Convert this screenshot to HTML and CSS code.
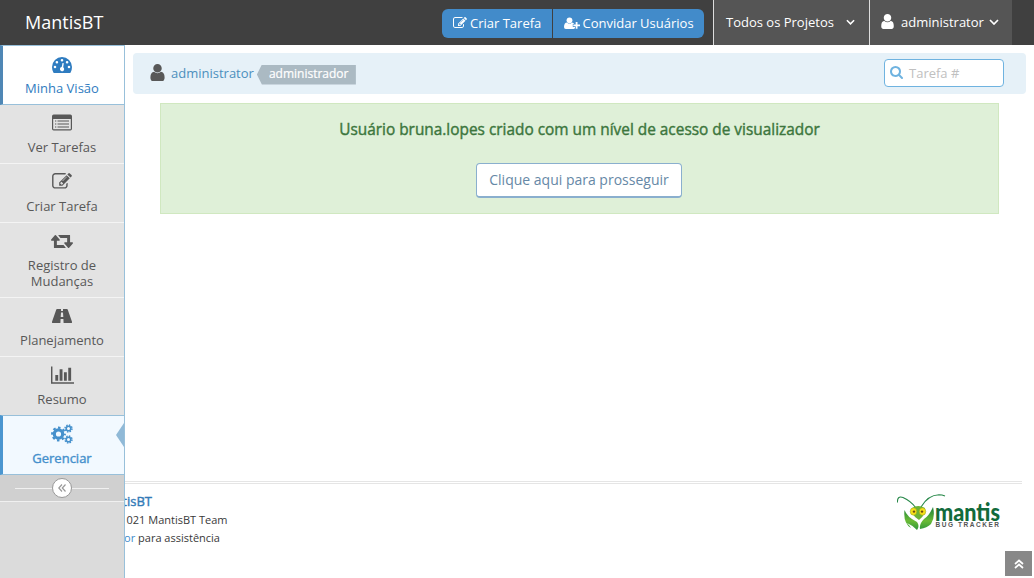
FILE: index.html
```html
<!DOCTYPE html>
<html lang="pt-BR">
<head>
<meta charset="utf-8">
<title>MantisBT</title>
<link rel="stylesheet" href="styles.css">
</head>
<body>
<svg class="defs" width="0" height="0">
  <symbol id="user" viewBox="256 128 1280 1536"><path d="M1536 1399q0 109-62.500 187t-150.500 78h-854q-88 0-150.500-78t-62.500-187q0-85 8.500-160.500t31.500-152 58.500-131 94-89 134.500-34.500q131 128 313 128t313-128q76 0 134.500 34.500t94 89 58.500 131 31.500 152 8.500 160.500zm-256-887q0 159-112.500 271.500t-271.500 112.500-271.500-112.500-112.500-271.500 112.500-271.500 271.500-112.500 271.500 112.500 112.500 271.500z"/></symbol>
  <symbol id="edit" viewBox="0 128 1792 1536"><path d="M888 1184l116-116-152-152-116 116v56h96v96h56zm440-720q-16-16-33 1l-350 350q-17 17-1 33t33-1l350-350q17-17 1-33zm80 594v190q0 119-84.500 203.500t-203.500 84.500h-832q-119 0-203.500-84.500t-84.500-203.500v-832q0-119 84.500-203.500t203.500-84.500h832q63 0 117 25 15 7 18 23 3 17-9 29l-49 49q-14 14-32 8-23-6-45-6h-832q-66 0-113 47t-47 113v832q0 66 47 113t113 47h832q66 0 113-47t47-113v-126q0-13 9-22l64-64q15-15 35-7t20 29zm-96-738l288 288-672 672h-288v-288zm444 132l-92 92-288-288 92-92q28-28 68-28t68 28l152 152q28 28 28 68t-28 68z"/></symbol>
  <symbol id="search" viewBox="64 128 1664 1664"><path d="M1216 832q0-185-131.500-316.500t-316.500-131.500-316.500 131.500-131.500 316.500 131.500 316.500 316.500 131.500 316.500-131.500 131.500-316.500zm512 832q0 52-38 90t-90 38q-54 0-90-38l-343-342q-179 124-399 124-143 0-273.500-55.500t-225-150-150-225-55.500-273.500 55.500-273.500 150-225 225-150 273.500-55.500 273.500 55.500 225 150 150 225 55.500 273.500q0 220-124 399l343 343q37 37 37 90z"/></symbol>
  <symbol id="down" viewBox="0 0 10 6"><path d="M1 1l4 4 4-4" fill="none" stroke="currentColor" stroke-width="1.700"/></symbol>
</svg>

<header class="navbar">
  <span class="brand">MantisBT</span>
  <div class="nav-right">
    <div class="btn-group">
      <a class="nav-btn"><svg class="i-edit"><use href="#edit"/></svg>Criar Tarefa</a>
      <a class="nav-btn"><svg class="i-plus" viewBox="0 0 16 12"><circle cx="5.500" cy="3.300" r="2.900"/><path d="M3 5.400Q5.500 7.800 8 5.400Q9.500 5.400 10.200 7H8.800V10H11V11Q10.500 12 9.400 12H1.800Q0 12 0 10Q0 5.600 3 5.400Z"/><path d="M11.700 5h1.800v2.500H16v1.800h-2.500v2.500h-1.800V9.300H9.300V7.500h2.400z"/></svg>Convidar Usuários</a>
    </div>
    <a class="nav-item projects">Todos os Projetos<svg class="i-down"><use href="#down"/></svg></a>
    <a class="nav-item account"><svg class="i-user"><use href="#user"/></svg>administrator<svg class="i-down"><use href="#down"/></svg></a>
  </div>
</header>

<div class="container">
  <nav class="sidebar">
    <a class="side-item hover"><svg viewBox="0 0 20 16"><path fill-rule="evenodd" d="M0 10A10 10 0 0 1 20 10Q20 13 18.600 15.500Q18.300 16 17.700 16H2.300Q1.700 16 1.400 15.500Q0 13 0 10ZM1.700 10a1.300 1.300 0 1 0 2.600 0a1.300 1.300 0 1 0-2.600 0M3.600 5.200a1.300 1.300 0 1 0 2.600 0a1.300 1.300 0 1 0-2.600 0M8.700 3.200a1.300 1.300 0 1 0 2.600 0a1.300 1.300 0 1 0-2.600 0M13.800 5.200a1.300 1.300 0 1 0 2.600 0a1.300 1.300 0 1 0-2.600 0M15.700 10a1.300 1.300 0 1 0 2.600 0a1.300 1.300 0 1 0-2.600 0M10.500 6L9.700 10A2.100 2.100 0 1 0 11.200 10.300L11.800 6.300Z"/></svg><span>Minha Visão</span></a>
    <a class="side-item"><svg viewBox="0 0 20 16"><path fill-rule="evenodd" d="M1.700 0H18.300Q20 0 20 1.700V14.300Q20 16 18.300 16H1.700Q0 16 0 14.300V1.700Q0 0 1.700 0ZM1.200 4.500V14.300Q1.200 14.800 1.700 14.800H18.300Q18.800 14.800 18.800 14.300V4.500Z"/><path d="M3 6h1.300v1H3zM5.500 6H17v1H5.500zM3 9h1.300v1H3zM5.500 9H17v1H5.500zM3 12h1.300v1H3zM5.500 12H17v1H5.500z"/></svg><span>Ver Tarefas</span></a>
    <a class="side-item"><svg><use href="#edit"/></svg><span>Criar Tarefa</span></a>
    <a class="side-item"><svg class="i-retweet" viewBox="0 384 1920 1152" preserveAspectRatio="none"><path d="M1280 1504q0 13-9.500 22.500t-22.500 9.500h-960q-8 0-13.500-2t-9-7-5.500-8-3-11.500-1-11.500v-600h-192q-26 0-45-19t-19-45q0-24 15-41l320-384q19-22 49-22t49 22l320 384q15 17 15 41 0 26-19 45t-45 19h-192v384h576q16 0 25 11l160 192q7 10 7 21zm640-416q0 24-15 41l-320 384q-20 23-49 23t-49-23l-320-384q-15-17-15-41 0-26 19-45t45-19h192v-384h-576q-16 0-25-12l-160-192q-7-9-7-20 0-13 9.500-22.500t22.500-9.500h960q8 0 13.500 2t9 7 5.500 8 3 11.500 1 11.500v600h192q26 0 45 19t19 45z"/></svg><span>Registro de Mudanças</span></a>
    <a class="side-item"><svg class="i-road" viewBox="0 0 20 14"><path fill-rule="evenodd" d="M5 0H9V2H11V0H15Q15.500 0 15.700.5L20 12.700Q20.200 14 19.300 14H11.600L11.400 10H8.600L8.400 14H.7Q-.2 14 0 12.700L4.300.5Q4.500 0 5 0ZM9 3.500L8.700 8H11.300L11 3.500Z"/></svg><span>Planejamento</span></a>
    <a class="side-item"><svg class="i-chart" viewBox="0 128 2048 1536"><path d="M640 896v512h-256v-512h256zm384-512v1024h-256v-1024h256zm1024 1152v128h-2048v-1536h128v1408h1920zm-640-896v768h-256v-768h256zm384-384v1152h-256v-1152h256z"/></svg><span>Resumo</span></a>
    <a class="side-item active"><svg class="i-cogs" viewBox="0 0 22 20"><g fill="none" stroke="currentColor"><circle cx="7.500" cy="10" r="4.200" stroke-width="3.200"/><circle cx="7.500" cy="10" r="6.300" stroke-width="2.200" stroke-dasharray="2.500 2.448" stroke-dashoffset="1.250"/><circle cx="17.500" cy="4.500" r="2.300" stroke-width="1.600"/><circle cx="17.500" cy="4.500" r="3.500" stroke-width="1.400" stroke-dasharray="1.500 1.249"/><circle cx="17.500" cy="15.500" r="2.300" stroke-width="1.600"/><circle cx="17.500" cy="15.500" r="3.500" stroke-width="1.400" stroke-dasharray="1.500 1.249"/></g></svg><span>Gerenciar</span><i class="arrow"></i></a>
    <div class="toggle"><span class="toggle-btn"><svg viewBox="0 0 8 8"><path d="M4 .5L.8 4L4 7.500M7.500.5L4.300 4L7.500 7.500" fill="none" stroke="currentColor" stroke-width="1.200"/></svg></span></div>
  </nav>

  <main class="main">
    <div class="crumbs">
      <svg class="i-user"><use href="#user"/></svg>
      <a class="crumb-user">administrator</a>
      <span class="label">administrador</span>
      <div class="search"><svg><use href="#search"/></svg><span>Tarefa #</span></div>
    </div>
    <section class="alert">
      <p>Usuário bruna.lopes criado com um nível de acesso de visualizador</p>
      <a class="proceed">Clique aqui para prosseguir</a>
    </section>
    <footer class="footer">
      <div class="credits">
        <div class="line l1"><a class="strong">tisBT</a></div>
        <div class="line l2">021 MantisBT Team</div>
        <div class="line l3"><span><a>or</a> para assistência</span></div>
      </div>
      <svg class="logo" viewBox="0 0 104 38">
        <defs><linearGradient id="claw" x2="0" y2="1"><stop offset="0" stop-color="#187f3a"/><stop offset=".6" stop-color="#6abb35"/><stop offset="1" stop-color="#2f963c"/></linearGradient></defs>
        <path d="M19 14Q14 7 6 3.500Q0 1.500 .5 8.500M24 13Q31 1 42 .7Q45 .7 48 2" fill="none" stroke="#278849" stroke-width="1.100"/>
        <path d="M7.500 16Q10 23 20 28Q23 32 20 36Q15 31 10 29Q13 32 14 34Q6 29 7.500 16ZM36 13Q38.500 23 34 30Q30 34 23 35Q22 30 27 25Q32 22 36 13Z" fill="url(#claw)"/>
        <path d="M15 14Q21 10 28 14L28 19Q25 24 22 26Q18 24 15 19Z" fill="#6cb334"/>
        <ellipse cx="16.500" cy="17.500" rx="3.300" ry="3.700" fill="#f5df18" stroke="#8fa323" stroke-width=".5"/>
        <ellipse cx="25.500" cy="17.500" rx="3.300" ry="3.700" fill="#f5df18" stroke="#8fa323" stroke-width=".5"/>
        <circle cx="17" cy="17.600" r="1.200" fill="#6d4a12"/><circle cx="25" cy="17.600" r="1.200" fill="#6d4a12"/>
        <text class="logo-name" x="38" y="26.500" textLength="65" lengthAdjust="spacingAndGlyphs">mantis</text>
        <text class="logo-sub" x="38.500" y="33" textLength="63.500" lengthAdjust="spacing">BUG TRACKER</text>
      </svg>
    </footer>
  </main>
</div>
<a class="scroll-up"><svg viewBox="0 0 10 10"><path d="M1 5L5 1.500L9 5M1 9L5 5.500L9 9" fill="none" stroke="currentColor" stroke-width="1.700"/></svg></a>
</body>
</html>
```
FILE: styles.css
```css
* { box-sizing: border-box; }
body { margin: 0; height: 578px; overflow: hidden; display: flex; flex-direction: column; font: 13px/20px "Open Sans", sans-serif; color: #393939; background: #fff; }
svg { fill: currentColor; display: block; flex: none; }
.defs { position: absolute; }
.navbar { height: 45px; flex: none; background: #404040; color: #fff; display: flex; justify-content: space-between; padding: 0 22px 0 25px; }
.brand { font-size: 18px; line-height: 44px; }
.nav-right { display: flex; }
.btn-group { display: flex; gap: 1px; padding: 9px 9px 7px 0; }
.nav-btn { display: flex; align-items: center; background: #428bca; height: 29px; padding-bottom: 2px; white-space: nowrap; }
.nav-btn:first-child { width: 110px; padding-left: 11px; border-radius: 6px 0 0 6px; gap: 3px; }
.nav-btn:last-child { width: 151px; padding-left: 11px; border-radius: 0 6px 6px 0; gap: 2.500px; }
.i-edit { width: 14px; height: 12px; }
.i-plus { width: 16px; height: 12px; }
.nav-item { height: 45px; line-height: 44px; background: #555; border-left: 1px solid #ddd; display: flex; align-items: center; white-space: nowrap; }
.projects { width: 156px; padding: 0 14px 1px 12px; justify-content: space-between; }
.account { width: 143px; padding: 0 13px 1px 11px; }
.account .i-user { width: 13px; height: 15px; margin: -2px 7px 0 0; }
.account .i-down { margin-left: auto; width: 10px; }
.i-down { width: 9px; height: 6px; margin-top: 0; }
.container { flex: 1; display: flex; min-height: 0; }
.sidebar { width: 125px; flex: none; position: relative; z-index: 1; background: #dbdbdb; border-right: 1px solid #98c0da; }
.side-item { position: relative; display: flex; flex-direction: column; align-items: center; min-height: 59px; padding: 9px 18px 8px; background: #e3e3e3; border-bottom: 1px solid #f4f4f4; color: #585858; line-height: 16px; text-align: center; }
.side-item svg { width: 20px; height: 17px; margin-bottom: 8px; }
.side-item span { margin: 0 -8px; }
.side-item:nth-child(4) span { margin: 0; }
.side-item .i-retweet { width: 22px; height: 13px; margin: 3px 0 9px; }
.side-item .i-road { width: 20px; height: 14px; margin: 2px 0 9px; }
.side-item .i-chart { width: 23px; height: 18px; margin-bottom: 7px; }
.side-item .i-cogs { width: 22px; height: 20px; margin: -1px 0 6px; }
.side-item.hover { min-height: 60px; background: #fff; color: #2f7cc0; border-top: 1px solid #98c0da; border-bottom-color: #98c0da; border-left: 3px solid #4f87b5; padding: 9px 18px 7px 15px; }
.side-item.hover svg { margin: 2px 0 7px; height: 16px; }
.side-item.active { min-height: 60px; margin-top: -1px; background: #f2f9ff; color: #4590cc; border-top: 1px solid #98c0da; border-bottom-color: #98c0da; border-left: 3px solid #4b96d0; padding-left: 15px; -webkit-text-stroke: .4px; }
.arrow { position: absolute; right: 0; top: 7px; border: solid transparent; border-width: 12px 8px 12px 0; border-right-color: #90b9d7; }
.toggle { height: 27px; background: #d0d0d0; border-bottom: 1px solid #f0f0f0; display: flex; align-items: center; justify-content: center; }
.toggle::before, .toggle::after { content: ""; width: 37px; height: 1px; background: #f0f0f0; }
.toggle-btn { width: 20px; height: 20px; border: 1px solid #999; border-radius: 50%; background: #fff; color: #999; display: flex; align-items: center; justify-content: center; }
.toggle-btn svg { width: 8px; height: 8px; }
.main { flex: 1; min-width: 0; display: flex; flex-direction: column; }
.crumbs { height: 41px; margin: 8px 8px 9px; padding: 0 22px 2px 16px; background: #e6f1f8; border-radius: 4px; display: flex; align-items: center; }
.crumbs .i-user { width: 17px; height: 17px; color: #585858; margin-right: 5px; }
.crumb-user { color: #4c8fbd; }
.label { height: 20px; margin: 4px 0 0 3px; padding: 0 7px 0 12px; background: #abbac3; color: #fff; font-size: 12px; line-height: 18px; -webkit-text-stroke: .2px; clip-path: polygon(5px 0, 100% 0, 100% 100%, 5px 100%, 0 50%); width: 99px; }
.search { margin-left: auto; width: 120px; height: 28px; border: 1px solid #6fb3e0; border-radius: 4px; background: #fff; display: flex; align-items: center; gap: 6px; padding-left: 5px; color: #c0c0c0; }
.search svg { width: 13px; height: 13px; color: #6fb3e0; margin-top: -1px; }
.alert { height: 111px; margin: 0 35px; border: 1px solid #d0e8c0; background: #dff0d8; display: flex; flex-direction: column; align-items: center; }
.alert p { margin: 16px 0 23px; font-size: 15.400px; line-height: 20px; color: #3c763d; -webkit-text-stroke: .4px; }
.proceed { width: 206px; height: 35px; margin-right: 1px; border: 1px solid #8aafce; border-bottom-width: 2px; border-radius: 4px; background: #fff; color: #6688a6; font-size: 14px; line-height: 32px; text-align: center; }
.footer { margin: auto 12px 0 0; height: 97px; border-top: 3px double #e5e5e5; display: flex; justify-content: space-between; }
.credits { width: 103px; padding-top: 8px; font-size: 11px; line-height: 18px; }
.line { display: flex; justify-content: flex-end; white-space: nowrap; }
.line a { color: #428bca; }
.line .strong { color: #337ab7; font-size: 13px; -webkit-text-stroke: .4px; }
.l1 { padding-right: 76px; margin-bottom: 1px; }
.l2 { padding-right: .5px; }
.l3 { padding-right: 8px; }
.logo { width: 104px; height: 38px; margin: 10px 21px 0 0; }
.logo-name { font: 900 25px Lato, sans-serif; fill: #126b3c; }
.logo-sub { font: 700 6.500px "Liberation Sans", sans-serif; fill: #555; }
.scroll-up { position: absolute; right: 2px; bottom: 2px; width: 27px; height: 25px; background: #888; color: #fff; display: flex; align-items: center; justify-content: center; }
.scroll-up svg { width: 10px; height: 10px; }
```
